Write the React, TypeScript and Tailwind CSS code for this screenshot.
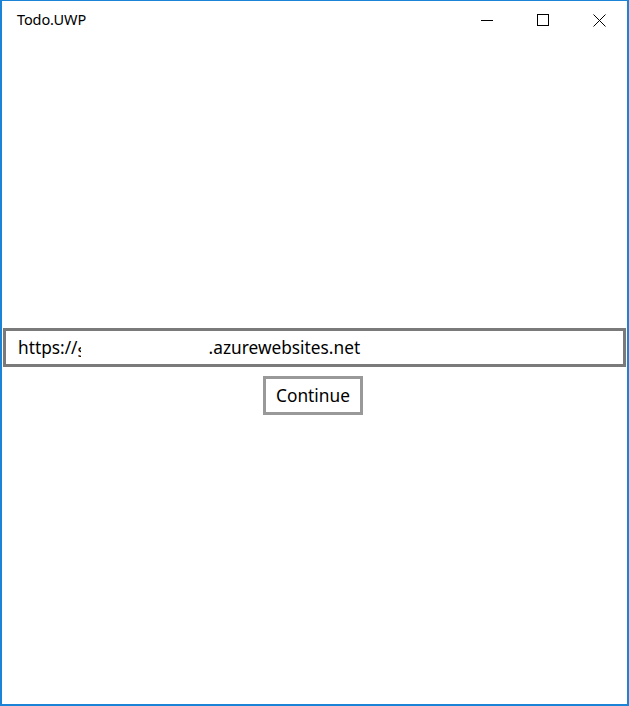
import React from 'react';

const font = { fontFamily: '"Noto Sans", "Open Sans", Arial, sans-serif' };

export default function App() {
    return (
        <div
            className="w-[629px] h-[706px] bg-white border-x-2 border-b-2 border-t border-[#1c84d6] flex flex-col text-black"
            style={font}
        >
            {/* Title bar */}
            <div className="h-[38px] shrink-0 flex items-center">
                <span className="pl-[15px] text-[14.5px] tracking-[-0.1px]">Todo.UWP</span>
                <div className="ml-auto flex items-center h-full">
                    <div className="w-[56px] h-full flex items-center justify-center">
                        <svg width="12" height="12" viewBox="0 0 12 12">
                            <line x1="0" y1="6.5" x2="12" y2="6.5" stroke="#000" strokeWidth="1" />
                        </svg>
                    </div>
                    <div className="w-[56px] h-full flex items-center justify-center">
                        <svg width="12" height="12" viewBox="0 0 12 12">
                            <rect x="0.5" y="0.5" width="11" height="11" fill="none" stroke="#000" strokeWidth="1" />
                        </svg>
                    </div>
                    <div className="w-[56px] h-full flex items-center justify-center">
                        <svg width="13" height="13" viewBox="0 0 13 13">
                            <path d="M0.5 0.5 L12.5 12.5 M12.5 0.5 L0.5 12.5" stroke="#000" strokeWidth="1" />
                        </svg>
                    </div>
                </div>
            </div>

            {/* Content */}
            <div className="flex-1 flex flex-col justify-center items-center">
                <div className="w-full px-px">
                    <div className="h-[39px] border-[3px] border-[#7a7a7a] flex items-center pl-[12px] text-[17.3px]">
                        <span>https://</span>
                        <span className="w-[131px] h-[20px] overflow-hidden inline-block">
                            <span className="inline-block w-[3px] overflow-hidden">s</span>
                        </span>
                        <span>.azurewebsites.net</span>
                    </div>
                </div>
                <button className="mt-[9px] mr-[3px] w-[100px] h-[39px] border-[3px] border-[#999999] text-[17.3px] flex items-center justify-center">
                    Continue
                </button>
            </div>
        </div>
    );
}
